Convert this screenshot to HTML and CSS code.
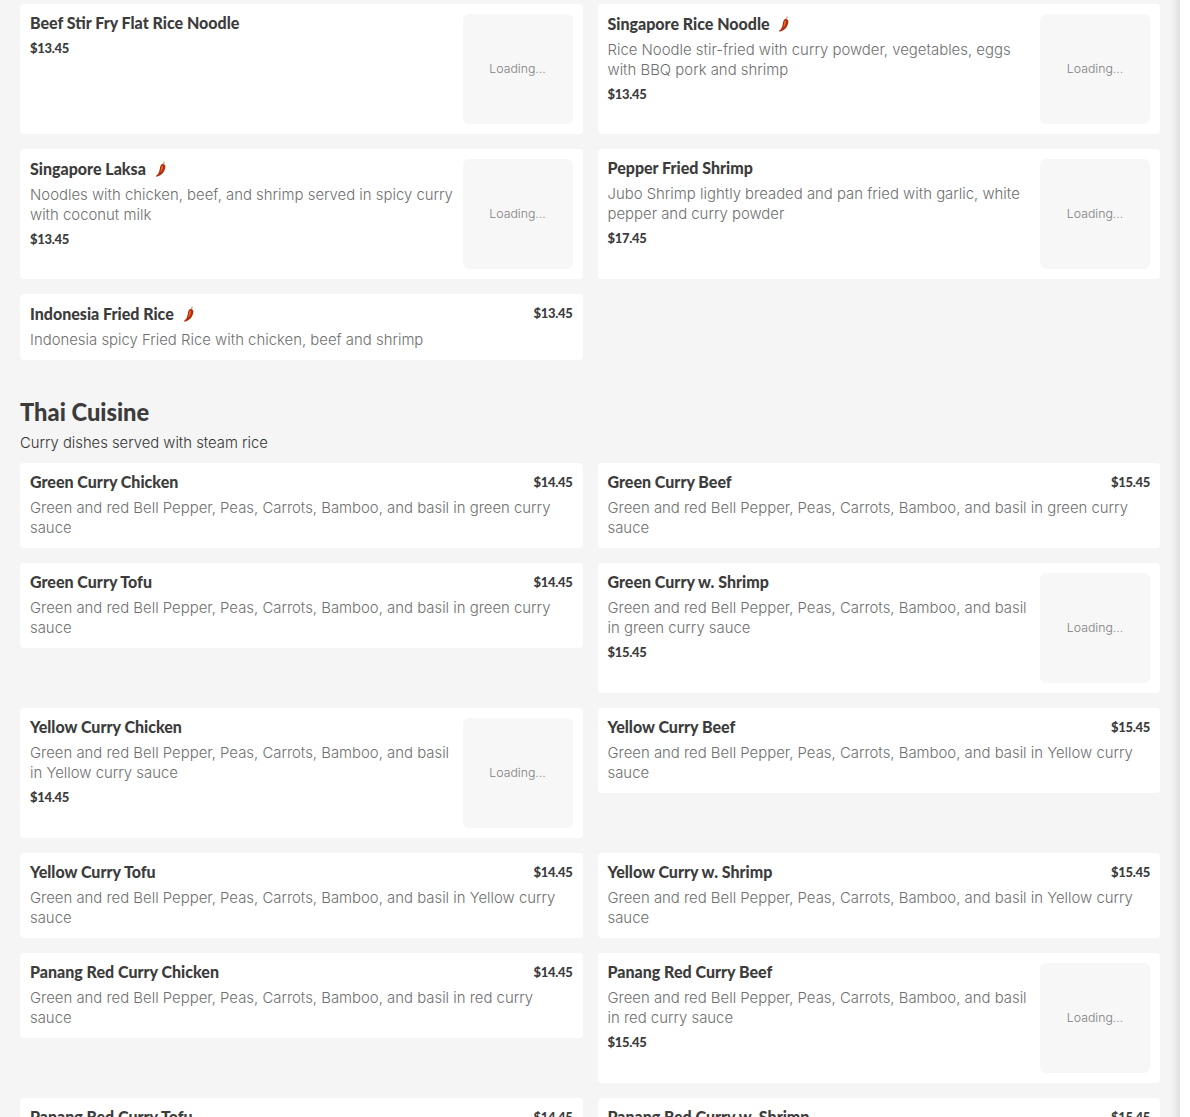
FILE: index.html
```html
<!DOCTYPE html>
<html lang="en">
<head>
  <meta charset="UTF-8" />
  <title>Menu</title>
  <link rel="stylesheet" href="styles.css">
</head>
<body>
  <!-- chili icon, reused by every spicy dish -->
  <svg class="sprite" xmlns="http://www.w3.org/2000/svg">
    <symbol id="chili" viewBox="0 0 12 16">
      <path fill="#d9a07a" d="M8.8 0.2C9.8 0.4 10 1.4 9.4 2.4L8.8 3.4L7.6 3L8.2 1.8C8.5 1.2 8.4 0.7 8.8 0.2z"/>
      <path fill="#b22c0e" d="M6.6 3.2C8.2 2.4 10.4 3.2 10.4 5.4C10.4 8.4 8.6 11.8 6 13.8C4.4 15 2.8 15.6 1.4 15.6C0.8 15.6 0.6 15 1.2 14.7C2.8 13.8 3.8 12 4.4 9.8C5 7.6 5 4.2 6.6 3.2z"/>
      <path fill="#e8692a" d="M7 4.6C7.8 4.2 8.2 5 8 6.2C7.7 8.2 6.8 10.2 5.4 11.8C6 9.6 6 5.4 7 4.6z"/>
    </symbol>
  </svg>

  <div class="page">
    <!-- previous section, scrolled partly out of view -->
    <section class="menu-section">
      <div class="dish-grid">
        <article class="dish">
          <div class="dish-body">
            <h3 class="dish-name">Beef Stir Fry Flat Rice Noodle</h3>
            <div class="dish-price">$13.45</div>
          </div>
          <div class="dish-thumb">Loading...</div>
        </article>
        <article class="dish">
          <div class="dish-body">
            <h3 class="dish-name">Singapore Rice Noodle <svg class="chili"><use href="#chili"/></svg></h3>
            <p class="dish-desc">Rice Noodle stir-fried with curry powder, vegetables, eggs with BBQ pork and shrimp</p>
            <div class="dish-price">$13.45</div>
          </div>
          <div class="dish-thumb">Loading...</div>
        </article>
        <article class="dish">
          <div class="dish-body">
            <h3 class="dish-name">Singapore Laksa <svg class="chili"><use href="#chili"/></svg></h3>
            <p class="dish-desc">Noodles with chicken, beef, and shrimp served in spicy curry with coconut milk</p>
            <div class="dish-price">$13.45</div>
          </div>
          <div class="dish-thumb">Loading...</div>
        </article>
        <article class="dish">
          <div class="dish-body">
            <h3 class="dish-name">Pepper Fried Shrimp</h3>
            <p class="dish-desc">Jubo Shrimp lightly breaded and pan fried with garlic, white pepper and curry powder</p>
            <div class="dish-price">$17.45</div>
          </div>
          <div class="dish-thumb">Loading...</div>
        </article>
        <article class="dish">
          <div class="dish-body">
            <div class="dish-head">
              <h3 class="dish-name">Indonesia Fried Rice <svg class="chili"><use href="#chili"/></svg></h3>
              <div class="dish-price">$13.45</div>
            </div>
            <p class="dish-desc">Indonesia spicy Fried Rice with chicken, beef and shrimp</p>
          </div>
        </article>
      </div>
    </section>

    <section class="menu-section">
      <h2 class="section-title">Thai Cuisine</h2>
      <div class="section-note">Curry dishes served with steam rice</div>
      <div class="dish-grid">
        <article class="dish">
          <div class="dish-body">
            <div class="dish-head">
              <h3 class="dish-name">Green Curry Chicken</h3>
              <div class="dish-price">$14.45</div>
            </div>
            <p class="dish-desc">Green and red Bell Pepper, Peas, Carrots, Bamboo, and basil in green curry sauce</p>
          </div>
        </article>
        <article class="dish">
          <div class="dish-body">
            <div class="dish-head">
              <h3 class="dish-name">Green Curry Beef</h3>
              <div class="dish-price">$15.45</div>
            </div>
            <p class="dish-desc">Green and red Bell Pepper, Peas, Carrots, Bamboo, and basil in green curry sauce</p>
          </div>
        </article>
        <article class="dish">
          <div class="dish-body">
            <div class="dish-head">
              <h3 class="dish-name">Green Curry Tofu</h3>
              <div class="dish-price">$14.45</div>
            </div>
            <p class="dish-desc">Green and red Bell Pepper, Peas, Carrots, Bamboo, and basil in green curry sauce</p>
          </div>
        </article>
        <article class="dish">
          <div class="dish-body">
            <h3 class="dish-name">Green Curry w. Shrimp</h3>
            <p class="dish-desc">Green and red Bell Pepper, Peas, Carrots, Bamboo, and basil in green curry sauce</p>
            <div class="dish-price">$15.45</div>
          </div>
          <div class="dish-thumb">Loading...</div>
        </article>
        <article class="dish">
          <div class="dish-body">
            <h3 class="dish-name">Yellow Curry Chicken</h3>
            <p class="dish-desc">Green and red Bell Pepper, Peas, Carrots, Bamboo, and basil in Yellow curry sauce</p>
            <div class="dish-price">$14.45</div>
          </div>
          <div class="dish-thumb">Loading...</div>
        </article>
        <article class="dish">
          <div class="dish-body">
            <div class="dish-head">
              <h3 class="dish-name">Yellow Curry Beef</h3>
              <div class="dish-price">$15.45</div>
            </div>
            <p class="dish-desc">Green and red Bell Pepper, Peas, Carrots, Bamboo, and basil in Yellow curry sauce</p>
          </div>
        </article>
        <article class="dish">
          <div class="dish-body">
            <div class="dish-head">
              <h3 class="dish-name">Yellow Curry Tofu</h3>
              <div class="dish-price">$14.45</div>
            </div>
            <p class="dish-desc">Green and red Bell Pepper, Peas, Carrots, Bamboo, and basil in Yellow curry sauce</p>
          </div>
        </article>
        <article class="dish">
          <div class="dish-body">
            <div class="dish-head">
              <h3 class="dish-name">Yellow Curry w. Shrimp</h3>
              <div class="dish-price">$15.45</div>
            </div>
            <p class="dish-desc">Green and red Bell Pepper, Peas, Carrots, Bamboo, and basil in Yellow curry sauce</p>
          </div>
        </article>
        <article class="dish">
          <div class="dish-body">
            <div class="dish-head">
              <h3 class="dish-name">Panang Red Curry Chicken</h3>
              <div class="dish-price">$14.45</div>
            </div>
            <p class="dish-desc">Green and red Bell Pepper, Peas, Carrots, Bamboo, and basil in red curry sauce</p>
          </div>
        </article>
        <article class="dish">
          <div class="dish-body">
            <h3 class="dish-name">Panang Red Curry Beef</h3>
            <p class="dish-desc">Green and red Bell Pepper, Peas, Carrots, Bamboo, and basil in red curry sauce</p>
            <div class="dish-price">$15.45</div>
          </div>
          <div class="dish-thumb">Loading...</div>
        </article>
        <article class="dish">
          <div class="dish-body">
            <div class="dish-head">
              <h3 class="dish-name">Panang Red Curry Tofu</h3>
              <div class="dish-price">$14.45</div>
            </div>
            <p class="dish-desc">Green and red Bell Pepper, Peas, Carrots, Bamboo, and basil in red curry sauce</p>
          </div>
        </article>
        <article class="dish">
          <div class="dish-body">
            <div class="dish-head">
              <h3 class="dish-name">Panang Red Curry w. Shrimp</h3>
              <div class="dish-price">$15.45</div>
            </div>
            <p class="dish-desc">Green and red Bell Pepper, Peas, Carrots, Bamboo, and basil in red curry sauce</p>
          </div>
        </article>
      </div>
    </section>
  </div>
</body>
</html>
```

FILE: styles.css
```css
/* page */
html, body {
  height: 1117px;
  overflow: hidden;
}
body {
  margin: 0;
  background: #fff;
  font-family: "Inter", "Liberation Sans", sans-serif;
  color: #3c3c3c;
}
.sprite {
  display: none;
}
.page {
  width: 1180px;
  height: 1117px;
  box-sizing: border-box;
  padding: 4px 20px 0 20px;
  /* the darker strip down the right edge */
  background: linear-gradient(to right, #f5f5f5 1170px, #e2e2e2 1180px);
}

/* section headings */
.menu-section + .menu-section {
  margin-top: 34px;
}
.section-title {
  margin: 0;
  font-family: "Lato", sans-serif;
  font-size: 23.7px;
  line-height: 36px;
  font-weight: 900;
  color: #3c3c3c;
}
.section-note {
  margin: 3px 0 10px 0;
  font-size: 14.8px;
  line-height: 20px;
  font-weight: 300;
  color: #333;
}

/* dish cards */
.dish-grid {
  display: grid;
  grid-template-columns: 1fr 1fr;
  gap: 15px;
  align-items: start;
}
.dish {
  display: flex;
  gap: 6px;
  padding: 10px;
  background: #fff;
  border-radius: 4px;
}
.dish-body {
  flex: 1;
  min-width: 0;
}
.dish-head {
  display: flex;
  justify-content: space-between;
}
.dish-name {
  margin: 0;
  font-family: "Lato", sans-serif;
  font-size: 16px;
  line-height: 18px;
  font-weight: 900;
  color: #3c3c3c;
}
/* names with a chili sit one pixel lower */
.dish-name:has(.chili) {
  padding-top: 1px;
}
.dish-desc {
  margin: 7px 0 0 0;
  font-size: 14.9px;
  line-height: 20px;
  font-weight: 300;
  color: #6f6f6f;
}
.dish-price {
  margin-top: 7px;
  font-family: "Lato", sans-serif;
  font-size: 13px;
  line-height: 14px;
  font-weight: 900;
  letter-spacing: -0.3px;
  color: #3c3c3c;
}
.dish-name + .dish-price {
  margin-top: 9px;
}
.dish-head .dish-price {
  margin-top: 2px;
}
.dish-thumb {
  flex: 0 0 110px;
  height: 110px;
  box-sizing: border-box;
  padding-bottom: 2px;
  display: flex;
  align-items: center;
  justify-content: center;
  border-radius: 6px;
  background: #f7f7f7;
  font-size: 12.3px;
  font-weight: 300;
  color: #808080;
}
.chili {
  width: 12px;
  height: 16px;
  margin-left: 5px;
  vertical-align: -2px;
}
```
